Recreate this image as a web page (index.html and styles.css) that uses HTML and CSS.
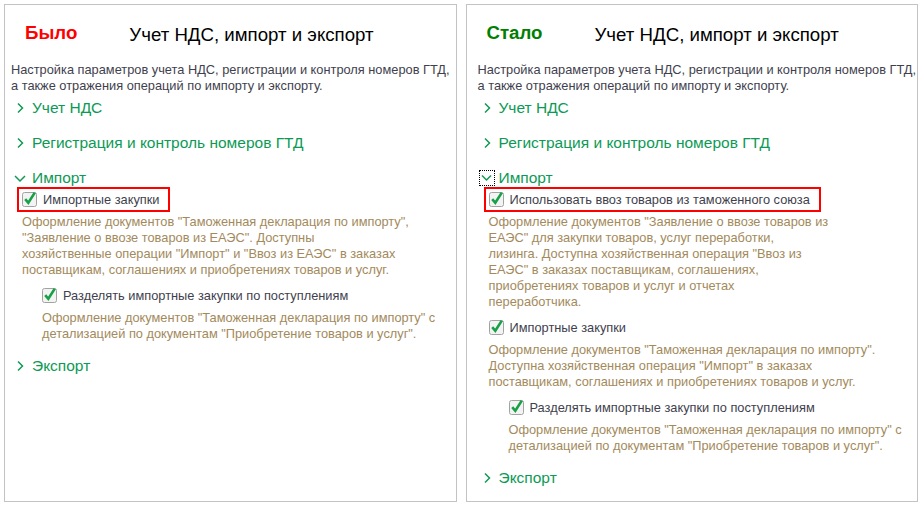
FILE: index.html
```html
<!DOCTYPE html>
<html lang="ru">
<head>
<meta charset="utf-8">
<title>Учет НДС, импорт и экспорт</title>
<link rel="stylesheet" href="styles.css">
</head>
<body>
  <section class="panel panel-old">
    <div class="head">
      <span class="tag tag-old">Было</span>
      <span class="title">Учет НДС, импорт и экспорт</span>
    </div>
    <div class="content">
      <p class="intro">Настройка параметров учета НДС, регистрации и контроля номеров ГТД,<br>а также отражения операций по импорту и экспорту.</p>

      <div class="group">
        <div class="group-title"><span class="toggle"><svg width="16" height="16" viewBox="0 0 16 16"><path d="M6 3.5 L10.5 8 L6 12.5" /></svg></span>Учет НДС</div>
      </div>
      <div class="group">
        <div class="group-title"><span class="toggle"><svg width="16" height="16" viewBox="0 0 16 16"><path d="M6 3.5 L10.5 8 L6 12.5" /></svg></span>Регистрация и контроль номеров ГТД</div>
      </div>
      <div class="group expanded">
        <div class="group-title"><span class="toggle"><svg width="16" height="16" viewBox="0 0 16 16"><path d="M3 6 L8 11 L13 6" /></svg></span>Импорт</div>
        <div class="check-item hl">
          <svg class="cb" width="15" height="15" viewBox="0 0 15 15"><rect x="0.5" y="0.5" width="14" height="14" rx="2" /><path d="M3.2 7.2 L6.3 10.8 L12.8 0.6" /></svg>
          <span class="label">Импортные закупки</span>
        </div>
        <p class="note">Оформление документов "Таможенная декларация по импорту",<br>"Заявление о ввозе товаров из ЕАЭС". Доступны<br>хозяйственные операции "Импорт" и "Ввоз из ЕАЭС" в заказах<br>поставщикам, соглашениях и приобретениях товаров и услуг.</p>
        <div class="check-item nested">
          <svg class="cb" width="15" height="15" viewBox="0 0 15 15"><rect x="0.5" y="0.5" width="14" height="14" rx="2" /><path d="M3.2 7.2 L6.3 10.8 L12.8 0.6" /></svg>
          <span class="label">Разделять импортные закупки по поступлениям</span>
        </div>
        <p class="note nested-note">Оформление документов "Таможенная декларация по импорту" с<br>детализацией по документам "Приобретение товаров и услуг".</p>
      </div>
      <div class="group">
        <div class="group-title"><span class="toggle"><svg width="16" height="16" viewBox="0 0 16 16"><path d="M6 3.5 L10.5 8 L6 12.5" /></svg></span>Экспорт</div>
      </div>
    </div>
  </section>

  <section class="panel panel-new">
    <div class="head">
      <span class="tag tag-new">Стало</span>
      <span class="title">Учет НДС, импорт и экспорт</span>
    </div>
    <div class="content">
      <p class="intro">Настройка параметров учета НДС, регистрации и контроля номеров ГТД,<br>а также отражения операций по импорту и экспорту.</p>

      <div class="group">
        <div class="group-title"><span class="toggle"><svg width="16" height="16" viewBox="0 0 16 16"><path d="M6 3.5 L10.5 8 L6 12.5" /></svg></span>Учет НДС</div>
      </div>
      <div class="group">
        <div class="group-title"><span class="toggle"><svg width="16" height="16" viewBox="0 0 16 16"><path d="M6 3.5 L10.5 8 L6 12.5" /></svg></span>Регистрация и контроль номеров ГТД</div>
      </div>
      <div class="group expanded">
        <div class="group-title"><span class="toggle focused"><svg width="16" height="16" viewBox="0 0 16 16"><path d="M3 5.5 L7.5 10 L12 5.5" /></svg></span>Импорт</div>
        <div class="check-item hl">
          <svg class="cb" width="15" height="15" viewBox="0 0 15 15"><rect x="0.5" y="0.5" width="14" height="14" rx="2" /><path d="M3.2 7.2 L6.3 10.8 L12.8 0.6" /></svg>
          <span class="label">Использовать ввоз товаров из таможенного союза</span>
        </div>
        <p class="note">Оформление документов "Заявление о ввозе товаров из<br>ЕАЭС" для закупки товаров, услуг переработки,<br>лизинга. Доступна хозяйственная операция "Ввоз из<br>ЕАЭС" в заказах поставщикам, соглашениях,<br>приобретениях товаров и услуг и отчетах<br>переработчика.</p>
        <div class="check-item">
          <svg class="cb" width="15" height="15" viewBox="0 0 15 15"><rect x="0.5" y="0.5" width="14" height="14" rx="2" /><path d="M3.2 7.2 L6.3 10.8 L12.8 0.6" /></svg>
          <span class="label">Импортные закупки</span>
        </div>
        <p class="note">Оформление документов "Таможенная декларация по импорту".<br>Доступна хозяйственная операция "Импорт" в заказах<br>поставщикам, соглашениях и приобретениях товаров и услуг.</p>
        <div class="check-item nested">
          <svg class="cb" width="15" height="15" viewBox="0 0 15 15"><rect x="0.5" y="0.5" width="14" height="14" rx="2" /><path d="M3.2 7.2 L6.3 10.8 L12.8 0.6" /></svg>
          <span class="label">Разделять импортные закупки по поступлениям</span>
        </div>
        <p class="note nested-note">Оформление документов "Таможенная декларация по импорту" с<br>детализацией по документам "Приобретение товаров и услуг".</p>
      </div>
      <div class="group">
        <div class="group-title"><span class="toggle"><svg width="16" height="16" viewBox="0 0 16 16"><path d="M6 3.5 L10.5 8 L6 12.5" /></svg></span>Экспорт</div>
      </div>
    </div>
  </section>
</body>
</html>
```

FILE: styles.css
```css
* {
  box-sizing: border-box;
}

html, body {
  background: #ffffff;
}

body {
  margin: 0;
  padding: 4px;
  display: flex;
  gap: 9px;
  font-family: "Liberation Sans", Arial, sans-serif;
  font-size: 12.8px;
  color: #3f3f4e;
}

.panel {
  width: 453px;
  height: 498px;
  border: 1px solid #c3c3c3;
  background: #ffffff;
}

.head {
  display: flex;
  align-items: flex-start;
  gap: 52px;
  margin-top: 17px;
  padding-left: 20px;
}

.tag {
  font-size: 18.67px;
  line-height: 22px;
  font-weight: bold;
}

.tag-old {
  color: #ff0000;
}

.tag-new {
  color: #008000;
}

.title {
  font-size: 18.67px;
  line-height: 22px;
  padding-top: 2px;
  color: #000000;
}

.content {
  padding-left: 6px;
}

.panel-new .content {
  padding-left: 11px;
}

.intro {
  margin: 16px 0 5px;
  line-height: 16px;
  white-space: nowrap;
}

.group {
  margin-bottom: 17px;
}

.group.expanded {
  margin-bottom: 15px;
}

.group-title {
  display: flex;
  align-items: center;
  height: 18px;
  font-size: 15.5px;
  line-height: 18px;
  color: #0c9a55;
}

.toggle {
  width: 16px;
  height: 16px;
  margin-left: 1px;
  margin-right: 4px;
  border: 1px dotted transparent;
  display: flex;
  align-items: center;
  justify-content: center;
}

.toggle svg {
  display: block;
  flex: none;
}

.toggle path {
  fill: none;
  stroke: #119a55;
  stroke-width: 1.5;
}

.toggle.focused {
  border-color: #000000;
}

.check-item {
  display: flex;
  align-items: center;
  width: fit-content;
  height: 25px;
  margin-left: 6px;
  padding: 0 8px 0 3px;
  border: 2px solid transparent;
  gap: 6px;
}

.check-item.hl {
  border-color: #ff0000;
  padding-right: 9px;
}

.check-item.nested {
  margin-left: 26px;
  margin-top: 5px;
}

.note + .check-item {
  margin-top: 5px;
}

.cb {
  display: block;
  flex: none;
  overflow: visible;
}

.cb rect {
  fill: #f3f3f3;
  stroke: #a2a2a2;
  stroke-width: 1;
}

.cb path {
  fill: none;
  stroke: #18a048;
  stroke-width: 2.6;
  stroke-linejoin: miter;
}

.label {
  line-height: 17px;
  color: #3f3f4e;
  white-space: nowrap;
}

.note {
  margin: 2px 0 0 11px;
  line-height: 16px;
  color: #a38a5c;
  white-space: nowrap;
}

.note.nested-note {
  margin-left: 31px;
}
```
